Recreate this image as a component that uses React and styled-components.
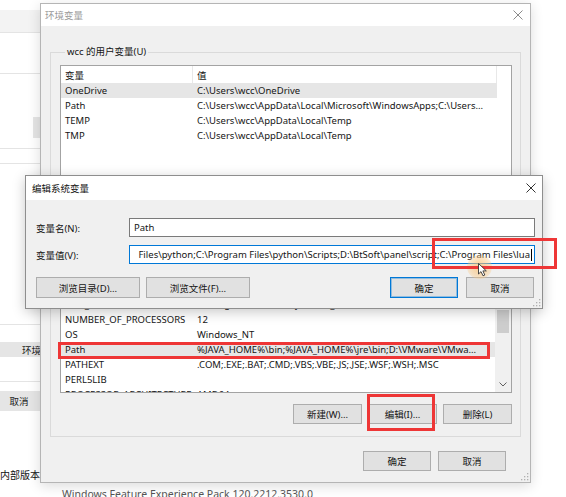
import styled, { createGlobalStyle } from 'styled-components';

const FONT = `'Noto Sans', 'Noto Sans CJK SC', sans-serif`;

const GlobalStyle = createGlobalStyle`
  html, body {
    margin: 0;
    padding: 0;
    background: #ffffff;
  }
`;

const Desktop = styled.div`
  position: relative;
  width: 566px;
  height: 497px;
  overflow: hidden;
  background: #ffffff;
  font-family: ${FONT};
  font-size: 9.5px;
  color: #151515;
`;

/* settings page behind the dialogs */
const Backdrop = styled.div`
  display: flex;
  flex-direction: column;
  width: 100%;
  height: 100%;
`;

const BgBand = styled.div`
  flex: none;
  width: 140px;
  height: ${p => p.$h}px;
  background: ${p => p.$bg || '#ffffff'};
  border-bottom: ${p => (p.$line ? '1px solid #e4e4e4' : 'none')};
  display: flex;
  align-items: stretch;
  justify-content: ${p => p.$justify || 'flex-start'};
`;

const BgButton = styled.div`
  flex: none;
  width: ${p => p.$w}px;
  margin-left: ${p => p.$ml || 0}px;
  background: #e5e5e5;
  display: flex;
  align-items: center;
  justify-content: center;
  font-size: 9.5px;
  color: #222;
`;

const BuildText = styled.div`
  flex: none;
  height: 14px;
  line-height: 14px;
  font-size: 10px;
  color: #111;
  white-space: nowrap;
`;

const PackText = styled.div`
  flex: none;
  margin-top: 5px;
  padding-left: 62px;
  line-height: 14px;
  font-size: 10.5px;
  color: #555;
  white-space: nowrap;
`;

/* windows */
const Window = styled.div`
  position: absolute;
  left: ${p => p.$x}px;
  top: ${p => p.$y}px;
  width: ${p => p.$w}px;
  height: ${p => p.$h}px;
  box-sizing: border-box;
  border: 1px solid ${p => (p.$active ? '#8e8e8e' : '#b5b5b5')};
  background: #f0f0f0;
  box-shadow: 0 3px 12px rgba(0, 0, 0, ${p => (p.$active ? 0.22 : 0.14)});
  display: flex;
  flex-direction: column;
`;

const TitleBar = styled.div`
  flex: none;
  height: ${p => p.$h}px;
  background: #ffffff;
  display: flex;
  align-items: center;
  justify-content: space-between;
  padding-left: ${p => p.$pl}px;
`;

const Title = styled.span`
  font-size: 9.5px;
  color: ${p => (p.$active ? '#111' : '#9a9a9a')};
`;

const CloseBox = styled.div`
  width: ${p => p.$w}px;
  height: 100%;
  display: flex;
  align-items: center;
  justify-content: center;
`;

const Grip = styled.svg`
  position: absolute;
  right: 1px;
  bottom: 1px;
`;

const MainBody = styled.div`
  flex: 1;
  display: flex;
  flex-direction: column;
  padding: 18px 9px 11px 9px;
`;

const Group = styled.fieldset`
  flex: none;
  margin: ${p => p.$mt}px 0 0 0;
  padding: 5px 8px 12px 9px;
  border: 1px solid #dadada;
  min-width: 0;
  display: flex;
  flex-direction: column;
`;

const Legend = styled.legend`
  margin-left: 5px;
  padding: 0 2px;
  height: 16px;
  line-height: 16px;
  font-size: 9.5px;
  color: #151515;
`;

const ListBox = styled.div`
  flex: none;
  height: ${p => p.$h}px;
  box-sizing: border-box;
  border: 1px solid #a3a3a3;
  background: #ffffff;
  display: flex;
  overflow: hidden;
`;

const ListMain = styled.div`
  flex: 1;
  min-width: 0;
  display: flex;
  flex-direction: column;
  overflow: hidden;
`;

const ListHeader = styled.div`
  flex: none;
  height: 17px;
  display: flex;
`;

const HeaderCell = styled.div`
  flex: none;
  width: ${p => p.$w}px;
  box-sizing: border-box;
  padding-left: 4px;
  display: flex;
  align-items: center;
  border-right: 1px solid #e8e8e8;
`;

const Rows = styled.div`
  display: flex;
  flex-direction: column;
  margin-top: ${p => p.$offset || 0}px;
`;

const Row = styled.div`
  flex: none;
  width: 436px;
  height: 15px;
  display: flex;
  align-items: center;
  background: ${p => (p.$selected ? '#e6e6e6' : 'transparent')};
`;

const Cell = styled.div`
  flex: none;
  width: ${p => p.$w}px;
  box-sizing: border-box;
  padding-left: 4px;
  white-space: nowrap;
  overflow: hidden;
`;

const ScrollTrack = styled.div`
  flex: none;
  width: 16px;
  background: #f0f0f0;
  display: flex;
  flex-direction: column;
  align-items: center;
`;

const Thumb = styled.div`
  flex: none;
  width: 12px;
  height: ${p => p.$h}px;
  margin-top: ${p => p.$top}px;
  background: #cdcdcd;
`;

const ArrowCell = styled.div`
  margin-top: auto;
  height: 16px;
  display: flex;
  align-items: center;
  justify-content: center;
`;

const ButtonRow = styled.div`
  flex: none;
  display: flex;
  justify-content: ${p => p.$justify || 'flex-end'};
  gap: ${p => p.$gap || 0}px;
  margin-top: ${p => p.$mt}px;
  padding-right: ${p => p.$pr || 0}px;
`;

const ButtonGroup = styled.div`
  display: flex;
  gap: ${p => p.$gap}px;
`;

const Button = styled.div`
  flex: none;
  width: ${p => p.$w}px;
  height: ${p => p.$h}px;
  box-sizing: border-box;
  background: #e1e1e1;
  border: 1px solid ${p => (p.$default ? '#0078d7' : '#adadad')};
  box-shadow: ${p => (p.$default ? 'inset 0 0 0 1px rgba(0, 120, 215, 0.35)' : 'none')};
  display: flex;
  align-items: center;
  justify-content: center;
  font-size: 9.5px;
  color: #151515;
`;

const EditBody = styled.div`
  flex: 1;
  display: flex;
  flex-direction: column;
  padding: 18px 7px 10px 10px;
`;

const FieldRow = styled.div`
  flex: none;
  height: 19px;
  display: flex;
  align-items: center;
  margin-top: ${p => p.$mt || 0}px;
`;

const FieldLabel = styled.div`
  flex: none;
  width: 93px;
`;

const TextBox = styled.div`
  flex: 1;
  min-width: 0;
  height: 19px;
  box-sizing: border-box;
  border: 1px solid ${p => (p.$focused ? '#0078d7' : '#7a7a7a')};
  background: #ffffff;
  padding: 0 2px 0 4px;
  display: flex;
  align-items: center;
  justify-content: ${p => (p.$focused ? 'flex-end' : 'flex-start')};
  overflow: hidden;
  white-space: nowrap;
  font-size: 9.5px;
`;

const Caret = styled.span`
  flex: none;
  width: 1px;
  height: 12px;
  margin-left: 1px;
  background: #000;
`;

/* annotations laid over the screen capture */
const RedBox = styled.div`
  position: absolute;
  left: ${p => p.$x}px;
  top: ${p => p.$y}px;
  width: ${p => p.$w}px;
  height: ${p => p.$h}px;
  box-sizing: border-box;
  border: 3px solid #ee3636;
`;

const Glow = styled.div`
  position: absolute;
  left: 467px;
  top: 255px;
  width: 25px;
  height: 24px;
  border-radius: 50%;
  background: radial-gradient(circle, rgba(250, 190, 110, 0.75) 0%, rgba(250, 200, 130, 0.45) 55%, rgba(255, 220, 160, 0) 100%);
`;

const Pointer = styled.svg`
  position: absolute;
  left: 478px;
  top: 263px;
`;

const CloseIcon = ({ color }) => (
  <svg width="10" height="10" viewBox="0 0 10 10">
    <path d="M0.5 0.5 L9.5 9.5 M9.5 0.5 L0.5 9.5" stroke={color} strokeWidth="1" fill="none" />
  </svg>
);

const ResizeGrip = () => (
  <Grip width="8" height="8" viewBox="0 0 8 8">
    <g fill="#b0b0b0">
      <rect x="6" y="0" width="1.3" height="1.3" />
      <rect x="3" y="3" width="1.3" height="1.3" />
      <rect x="6" y="3" width="1.3" height="1.3" />
      <rect x="0" y="6" width="1.3" height="1.3" />
      <rect x="3" y="6" width="1.3" height="1.3" />
      <rect x="6" y="6" width="1.3" height="1.3" />
    </g>
  </Grip>
);

const userVars = [
  ['OneDrive', 'C:\\Users\\wcc\\OneDrive', true],
  ['Path', 'C:\\Users\\wcc\\AppData\\Local\\Microsoft\\WindowsApps;C:\\Users...'],
  ['TEMP', 'C:\\Users\\wcc\\AppData\\Local\\Temp'],
  ['TMP', 'C:\\Users\\wcc\\AppData\\Local\\Temp'],
];

const systemVars = [
  ['ComSpec', 'C:\\WINDOWS\\system32\\cmd.exe'],
  ['DriverData', 'C:\\Windows\\System32\\Drivers\\DriverData'],
  ['JAVA_HOME', 'C:\\Program Files\\Java\\jdk1.8.0_281'],
  ['NUMBER_OF_PROCESSORS', '12'],
  ['OS', 'Windows_NT'],
  ['Path', '%JAVA_HOME%\\bin;%JAVA_HOME%\\jre\\bin;D:\\VMware\\VMwa...', true],
  ['PATHEXT', '.COM;.EXE;.BAT;.CMD;.VBS;.VBE;.JS;.JSE;.WSF;.WSH;.MSC'],
  ['PERL5LIB', ''],
  ['PROCESSOR_ARCHITECTURE', 'AMD64'],
  ['PROCESSOR_IDENTIFIER', 'Intel64 Family 6 Model 158 Stepping 10, GenuineIntel'],
];

const VarList = ({ height, vars, offset, scroll }) => (
  <ListBox $h={height}>
    <ListMain>
      <ListHeader>
        <HeaderCell $w={132}>变量</HeaderCell>
        <HeaderCell $w={304}>值</HeaderCell>
      </ListHeader>
      <Rows $offset={offset}>
        {vars.map(([name, value, selected]) => (
          <Row key={name} $selected={selected}>
            <Cell $w={132}>{name}</Cell>
            <Cell $w={304}>{value}</Cell>
          </Row>
        ))}
      </Rows>
    </ListMain>
    {scroll && (
      <ScrollTrack>
        <Thumb $top={59} $h={23} />
        <ArrowCell>
          <svg width="8" height="5" viewBox="0 0 8 5">
            <path d="M0.5 0.5 L4 4 L7.5 0.5" stroke="#606060" strokeWidth="1" fill="none" />
          </svg>
        </ArrowCell>
      </ScrollTrack>
    )}
  </ListBox>
);

export default function App() {
  return (
    <Desktop>
      <GlobalStyle />

      <Backdrop>
        <BgBand $h={10} />
        <BgBand $h={22} $bg="#f3f3f3" $line />
        <BgBand $h={40} $line />
        <BgBand $h={43} />
        <BgBand $h={21} $justify="flex-end">
          <BgButton $w={107} />
        </BgBand>
        <BgBand $h={10} $line />
        <BgBand $h={14} $line />
        <BgBand $h={160} $line />
        <BgBand $h={17} />
        <BgBand $h={15}>
          <BgButton $w={82}>环境变量</BgButton>
        </BgBand>
        <BgBand $h={24} $line />
        <BgBand $h={9} />
        <BgBand $h={20}>
          <BgButton $w={70} $ml={-16}>取消</BgButton>
        </BgBand>
        <BgBand $h={57} />
        <BuildText>内部版本</BuildText>
        <PackText>Windows Feature Experience Pack 120.2212.3530.0</PackText>
      </Backdrop>

      <Window $x={40} $y={3} $w={491} $h={480}>
        <TitleBar $h={22} $pl={4}>
          <Title>环境变量</Title>
          <CloseBox $w={24}>
            <CloseIcon color="#8a8a8a" />
          </CloseBox>
        </TitleBar>
        <MainBody>
          <Group $mt={0}>
            <Legend>wcc 的用户变量(U)</Legend>
            <VarList height={116} vars={userVars} />
            <ButtonRow $mt={11} $gap={6}>
              <Button $w={69} $h={20}>新建(N)...</Button>
              <Button $w={69} $h={20}>编辑(E)...</Button>
              <Button $w={69} $h={20}>删除(D)</Button>
            </ButtonRow>
          </Group>
          <Group $mt={4}>
            <Legend>系统变量(S)</Legend>
            <VarList height={143} vars={systemVars} offset={-1} scroll />
            <ButtonRow $mt={11} $gap={6}>
              <Button $w={69} $h={20}>新建(W)...</Button>
              <Button $w={69} $h={20}>编辑(I)...</Button>
              <Button $w={69} $h={20}>删除(L)</Button>
            </ButtonRow>
          </Group>
          <ButtonRow $mt={14} $gap={7} $pr={15}>
            <Button $w={68} $h={20}>确定</Button>
            <Button $w={68} $h={20}>取消</Button>
          </ButtonRow>
        </MainBody>
        <ResizeGrip />
      </Window>

      <Window $x={25} $y={175} $w={518} $h={134} $active>
        <TitleBar $h={24} $pl={6}>
          <Title $active>编辑系统变量</Title>
          <CloseBox $w={22}>
            <CloseIcon color="#333" />
          </CloseBox>
        </TitleBar>
        <EditBody>
          <FieldRow>
            <FieldLabel>变量名(N):</FieldLabel>
            <TextBox>Path</TextBox>
          </FieldRow>
          <FieldRow $mt={8}>
            <FieldLabel>变量值(V):</FieldLabel>
            <TextBox $focused>
              Files\python;C:\Program Files\python\Scripts;D:\BtSoft\panel\script;C:\Program Files\lua
              <Caret />
            </TextBox>
          </FieldRow>
          <ButtonRow $mt={13} $justify="space-between" $pr={1}>
            <ButtonGroup $gap={6}>
              <Button $w={104} $h={21}>浏览目录(D)...</Button>
              <Button $w={104} $h={21}>浏览文件(F)...</Button>
            </ButtonGroup>
            <ButtonGroup $gap={8}>
              <Button $w={68} $h={21} $default>确定</Button>
              <Button $w={68} $h={21}>取消</Button>
            </ButtonGroup>
          </ButtonRow>
        </EditBody>
        <ResizeGrip />
      </Window>

      <Glow />
      <RedBox $x={432} $y={238} $w={125} $h={31} />
      <RedBox $x={58} $y={342} $w={432} $h={17} />
      <RedBox $x={367} $y={394} $w={68} $h={37} />
      <Pointer width="10" height="14" viewBox="0 0 10 14">
        <path d="M0.5 0.5 L0.5 11 L3 8.6 L5 12.8 L6.8 12 L4.9 7.9 L8.3 7.9 Z" fill="#ffffff" stroke="#333" strokeWidth="0.9" />
      </Pointer>
    </Desktop>
  );
}
